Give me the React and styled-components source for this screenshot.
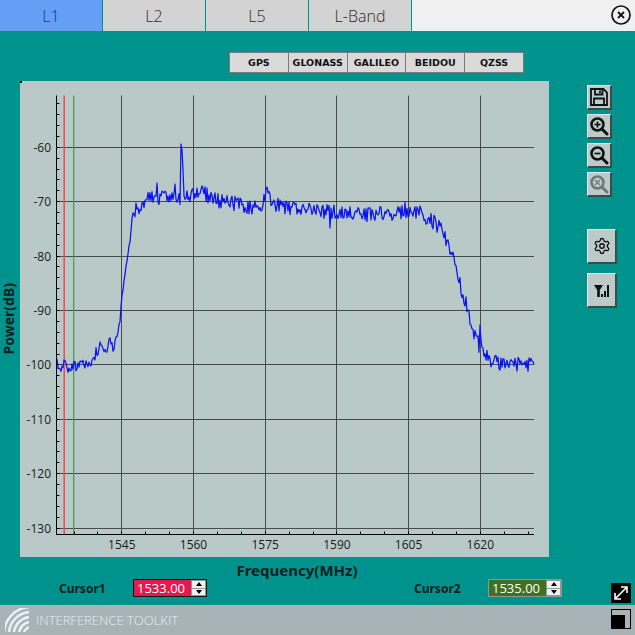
import React, { useMemo } from "react";
import styled, { createGlobalStyle } from "styled-components";
import { Settings } from "lucide-react";

const GlobalStyle = createGlobalStyle`
  html, body {
    margin: 0;
    padding: 0;
    background: #00938d;
  }
  * {
    box-sizing: border-box;
  }
`;

const Page = styled.div`
  position: relative;
  width: 635px;
  height: 635px;
  display: flex;
  flex-direction: column;
  overflow: hidden;
  background: #00938d;
  font-family: "Open Sans", "Noto Sans", sans-serif;
`;

const TabBar = styled.div`
  height: 31px;
  flex: none;
  display: flex;
  gap: 1px;
  background: #f0f0f0;
`;

const Tab = styled.div`
  width: 102px;
  display: flex;
  align-items: center;
  justify-content: center;
  font-size: 16px;
  font-weight: 300;
  color: ${(p) => (p.$active ? "#17348c" : "#2c2c2c")};
  background: ${(p) => (p.$active ? "#659ff5" : "#d3d3d3")};
  box-shadow: 1px 0 0 #00938d;
`;

const CloseButton = styled.button`
  position: absolute;
  top: 4px;
  right: 3px;
  width: 22px;
  height: 22px;
  padding: 0;
  border: 0;
  background: none;
`;

const ConstellationBar = styled.div`
  flex: none;
  display: flex;
  margin: 21px 0 0 229px;
  height: 21px;
  width: 295px;
  border: 1px solid #7a7a7a;
  background: #7a7a7a;
  gap: 1px;
`;

const ConstellationButton = styled.div`
  flex: 1;
  display: flex;
  align-items: center;
  justify-content: center;
  background: #dadada;
  color: #111;
  font-family: "DejaVu Sans", sans-serif;
  font-size: 9.5px;
  font-weight: 700;
`;

const Workspace = styled.div`
  flex: none;
  display: flex;
  margin-top: 8px;
  height: 476px;
`;

const YLabelColumn = styled.div`
  width: 20px;
  flex: none;
  display: flex;
  align-items: center;
  justify-content: flex-start;
`;

const YLabel = styled.div`
  writing-mode: vertical-rl;
  transform: rotate(180deg);
  font-family: "Noto Sans", sans-serif;
  font-size: 14px;
  font-weight: 700;
  line-height: 17px;
  color: #06201f;
  white-space: nowrap;
`;

const ChartPanel = styled.div`
  position: relative;
  width: 529px;
  height: 476px;
  flex: none;
  background: #b9c9c8;
  &::before {
    content: "";
    position: absolute;
    left: 0;
    top: 0;
    width: 2px;
    height: 2px;
    background: #000;
  }
`;

const ChartSvg = styled.svg`
  display: block;
  width: 100%;
  height: 100%;
`;

const SideBar = styled.div`
  display: flex;
  flex-direction: column;
  align-items: flex-start;
  margin-left: 38px;
  padding-top: 4px;
`;

const ToolButton = styled.div`
  width: ${(p) => (p.$large ? "30px" : "25px")};
  height: ${(p) => (p.$large ? "35px" : "25px")};
  margin-bottom: ${(p) => p.$gap || 4}px;
  display: flex;
  align-items: center;
  justify-content: center;
  background: #bccbca;
  border-top: 1px solid #dfe8e7;
  border-left: 1px solid #dfe8e7;
  border-right: 2px solid #3d4a49;
  border-bottom: 2px solid #3d4a49;
  color: ${(p) => (p.$disabled ? "#6f7877" : "#101010")};
`;

const XLabel = styled.div`
  flex: none;
  height: 22px;
  padding-left: 45px;
  width: 549px;
  text-align: center;
  font-family: "Noto Sans", sans-serif;
  font-size: 15px;
  font-weight: 700;
  line-height: 26px;
  color: #06201f;
`;

const CursorRow = styled.div`
  flex: none;
  height: 26px;
  display: flex;
  align-items: flex-start;
`;

const CursorGroup = styled.div`
  display: flex;
  align-items: center;
  height: 18px;
  margin-left: ${(p) => p.$offset}px;
`;

const CursorName = styled.div`
  width: 74px;
  font-family: "Noto Sans", sans-serif;
  font-size: 12px;
  font-weight: 700;
  color: #06201f;
`;

const Spin = styled.div`
  width: ${(p) => p.$width}px;
  height: 18px;
  display: flex;
  border: 1px solid ${(p) => p.$border};
  background: ${(p) => p.$bg};
`;

const SpinValue = styled.div`
  flex: 1;
  padding-left: 3px;
  font-size: 13px;
  line-height: 16px;
  color: #fff;
`;

const SpinArrows = styled.div`
  width: 15px;
  flex: none;
  display: flex;
  flex-direction: column;
  gap: 1px;
  padding: 1px;
  background: #8d9a99;
`;

const SpinArrow = styled.div`
  flex: 1;
  display: flex;
  align-items: center;
  justify-content: center;
  background: #f0f0f0;
  &::after {
    content: "";
    border-left: 3px solid transparent;
    border-right: 3px solid transparent;
    ${(p) => (p.$down ? "border-top: 4px solid #000;" : "border-bottom: 4px solid #000;")}
  }
`;

const Footer = styled.div`
  flex: 1;
  display: flex;
  align-items: center;
  gap: 7px;
  padding-left: 5px;
  background: #a7b3b7;
`;

const FooterTitle = styled.div`
  font-size: 13px;
  font-weight: 300;
  color: #e3edf2;
`;

const WindowControls = styled.div`
  position: absolute;
  left: 611px;
  top: 583px;
  display: flex;
  flex-direction: column;
  gap: 6px;
`;

const WindowIcon = styled.div`
  width: 20px;
  height: 20px;
  display: block;
  line-height: 0;
`;

// pixel scale of the plot, same numbers as the real axes
const xOf = (f) => 121.8 + (f - 1545) * 4.78;
const yOf = (d) => 147.3 + (-60 - d) * 5.44;
const snap = (v) => Math.floor(v) + 0.5;
const LEFT = 56.5;
const RIGHT = 534;
const TOP = 95.5;
const BOTTOM = 534.5;

const envelope = [
  [57, 366], [75, 365], [92, 363], [97, 351], [102, 347], [110, 344], [115, 344],
  [118, 331], [120, 320], [122, 297], [125, 273], [130, 240], [133, 211], [140, 208],
  [148, 199], [160, 198], [175, 197], [186, 197], [195, 192], [203, 193], [212, 199],
  [225, 202], [240, 204], [250, 208], [262, 205], [267, 192], [275, 205], [290, 208],
  [310, 209], [330, 212], [350, 214], [380, 214], [400, 212], [420, 213], [430, 219],
  [440, 228], [450, 250], [455, 265], [460, 285], [465, 300], [470, 320], [475, 337],
  [478, 343], [483, 353], [490, 360], [500, 363], [534, 365],
];

const spikes = { 134: 214, 136: 203, 157: 183, 168: 196, 175: 184, 181: 144, 182: 150, 183: 170, 267: 187, 330: 228, 405: 202, 480: 325, 481: 340 };

function buildTrace() {
  let seed = 4711;
  const rand = () => {
    seed = (seed * 16807) % 2147483647;
    return seed / 2147483647 - 0.5;
  };
  const pts = [];
  let seg = 0;
  for (let x = 57; x <= 534; x += 1) {
    while (envelope[seg + 1][0] < x) seg += 1;
    const [x0, y0] = envelope[seg];
    const [x1, y1] = envelope[seg + 1];
    const base = y0 + ((y1 - y0) * (x - x0)) / (x1 - x0);
    const calm = x > 116 && x < 134;
    const y = spikes[x] || base + rand() * (calm ? 4 : 15);
    pts.push(`${x},${y.toFixed(1)}`);
  }
  return pts.join(" ");
}

function Chart() {
  const trace = useMemo(buildTrace, []);
  const freqs = [1545, 1560, 1575, 1590, 1605, 1620];
  const powers = [-60, -70, -80, -90, -100, -110, -120, -130];
  const minorX = [];
  for (let f = 1535; f <= 1630; f += 5) minorX.push(f);
  const minorY = [];
  for (let d = -52; d >= -130; d -= 2) minorY.push(d);

  return (
    <ChartSvg viewBox="20 81 529 476">
      <g stroke="#4a4a4a" strokeWidth="1">
        {freqs.map((f) => (
          <line key={f} x1={snap(xOf(f))} x2={snap(xOf(f))} y1={TOP} y2={BOTTOM} />
        ))}
        {powers.map((d) => (
          <line key={d} x1={LEFT} x2={RIGHT} y1={snap(yOf(d))} y2={snap(yOf(d))} />
        ))}
      </g>
      <line x1="64.2" x2="64.2" y1={TOP} y2={BOTTOM} stroke="#f04848" strokeWidth="1.5" />
      <line x1="73.7" x2="73.7" y1={TOP} y2={BOTTOM} stroke="#3f9a4a" strokeWidth="1.2" />
      <polyline points={trace} fill="none" stroke="#0b14f0" strokeWidth="1.25" strokeLinejoin="round" />
      <g stroke="#000" strokeWidth="1">
        <line x1={LEFT} x2={LEFT} y1={TOP} y2={BOTTOM + 0.5} />
        <line x1={LEFT} x2={RIGHT} y1={BOTTOM} y2={BOTTOM} />
        {minorX.map((f) => (
          <line key={f} x1={snap(xOf(f))} x2={snap(xOf(f))} y1={BOTTOM - 3} y2={BOTTOM} />
        ))}
        {minorY.map((d) => (
          <line key={d} x1={LEFT} x2={LEFT + 3} y1={snap(yOf(d))} y2={snap(yOf(d))} />
        ))}
      </g>
      <g fontFamily="'Open Sans', sans-serif" fontSize="12" fill="#1a1a1a">
        {powers.map((d) => (
          <text key={d} x="51" y={Math.floor(yOf(d)) + 4.5} textAnchor="end">{d}</text>
        ))}
        {freqs.map((f) => (
          <text key={f} x={xOf(f)} y="549" textAnchor="middle">{f}</text>
        ))}
      </g>
    </ChartSvg>
  );
}

function MagnifierIcon({ kind }) {
  return (
    <svg width="20" height="20" viewBox="0 0 20 20" fill="none" stroke="currentColor">
      <circle cx="8.5" cy="8.5" r="6" strokeWidth="2.5" />
      <path d="M13 13l5 5" strokeWidth="3" strokeLinecap="round" />
      {kind !== "fit" && <path d="M5.5 8.5h6" strokeWidth="1.7" />}
      {kind === "in" && <path d="M8.5 5.5v6" strokeWidth="1.7" />}
      {kind === "fit" && <path d="M6 6l5 5M11 6l-5 5" strokeWidth="1.2" />}
    </svg>
  );
}

function SaveIcon() {
  return (
    <svg width="18" height="18" viewBox="0 0 18 18" fill="none" stroke="currentColor" strokeWidth="1.8">
      <path d="M1 1h12.5L17 4.5V17H1z" />
      <path d="M5 1v5.5h7.5V1" />
      <path d="M4 17v-6.5h10V17" />
      <path d="M10 2.5v2.5" />
    </svg>
  );
}

function SignalIcon() {
  return (
    <svg width="15" height="13" viewBox="0 0 15 13" fill="currentColor">
      <path d="M0 1h9L5.8 6v7H3.2V6z" />
      <rect x="7" y="10" width="2" height="3" />
      <rect x="10" y="7" width="2" height="6" />
      <rect x="13" y="1" width="2" height="12" />
    </svg>
  );
}

// concentric quarter rings around the lower right corner
function LogoIcon() {
  return (
    <svg width="24" height="24" viewBox="0 0 24 24" fill="none" stroke="#e8f0f3" strokeWidth="2.6">
      <circle cx="26" cy="26" r="7" />
      <circle cx="26" cy="26" r="12" />
      <circle cx="26" cy="26" r="17" />
      <circle cx="26" cy="26" r="22" />
      <circle cx="26" cy="26" r="27" />
    </svg>
  );
}

const tabs = ["L1", "L2", "L5", "L-Band"];
const constellations = ["GPS", "GLONASS", "GALILEO", "BEIDOU", "QZSS"];

export default function App() {
  return (
    <Page>
      <GlobalStyle />
      <TabBar>
        {tabs.map((t, i) => (
          <Tab key={t} $active={i === 0}>{t}</Tab>
        ))}
      </TabBar>
      <CloseButton>
        <svg width="22" height="22" viewBox="0 0 22 22" fill="none" stroke="#111">
          <circle cx="11" cy="11" r="9" strokeWidth="1.7" />
          <path d="M8 8l6 6M14 8l-6 6" strokeWidth="1.8" />
        </svg>
      </CloseButton>

      <ConstellationBar>
        {constellations.map((c) => (
          <ConstellationButton key={c}>{c}</ConstellationButton>
        ))}
      </ConstellationBar>

      <Workspace>
        <YLabelColumn>
          <YLabel>Power(dB)</YLabel>
        </YLabelColumn>
        <ChartPanel>
          <Chart />
        </ChartPanel>
        <SideBar>
          <ToolButton><SaveIcon /></ToolButton>
          <ToolButton><MagnifierIcon kind="in" /></ToolButton>
          <ToolButton><MagnifierIcon kind="out" /></ToolButton>
          <ToolButton $disabled $gap={32}><MagnifierIcon kind="fit" /></ToolButton>
          <ToolButton $large $gap={9}><Settings size={18} strokeWidth={1.8} /></ToolButton>
          <ToolButton $large><SignalIcon /></ToolButton>
        </SideBar>
      </Workspace>

      <XLabel>Frequency(MHz)</XLabel>

      <CursorRow>
        <CursorGroup $offset={59}>
          <CursorName>Cursor1</CursorName>
          <Spin $width={74} $bg="#e8174d" $border="#111">
            <SpinValue>1533.00</SpinValue>
            <SpinArrows><SpinArrow /><SpinArrow $down /></SpinArrows>
          </Spin>
        </CursorGroup>
        <CursorGroup $offset={207}>
          <CursorName>Cursor2</CursorName>
          <Spin $width={74} $bg="#41701f" $border="#8a9a98">
            <SpinValue>1535.00</SpinValue>
            <SpinArrows><SpinArrow /><SpinArrow $down /></SpinArrows>
          </Spin>
        </CursorGroup>
      </CursorRow>

      <Footer>
        <LogoIcon />
        <FooterTitle>INTERFERENCE TOOLKIT</FooterTitle>
      </Footer>

      <WindowControls>
        <WindowIcon>
          <svg width="20" height="20" viewBox="0 0 20 20">
            <rect width="20" height="20" fill="#000" />
            <path d="M4 16L16 4M10 4h6v6M4 10v6h6" fill="none" stroke="#fff" strokeWidth="1.6" />
          </svg>
        </WindowIcon>
        <WindowIcon>
          <svg width="20" height="20" viewBox="0 0 20 20">
            <rect width="20" height="20" fill="#000" />
            <path d="M1 1h18v18h-5V6H1z" fill="#a7b3b7" />
          </svg>
        </WindowIcon>
      </WindowControls>
    </Page>
  );
}
